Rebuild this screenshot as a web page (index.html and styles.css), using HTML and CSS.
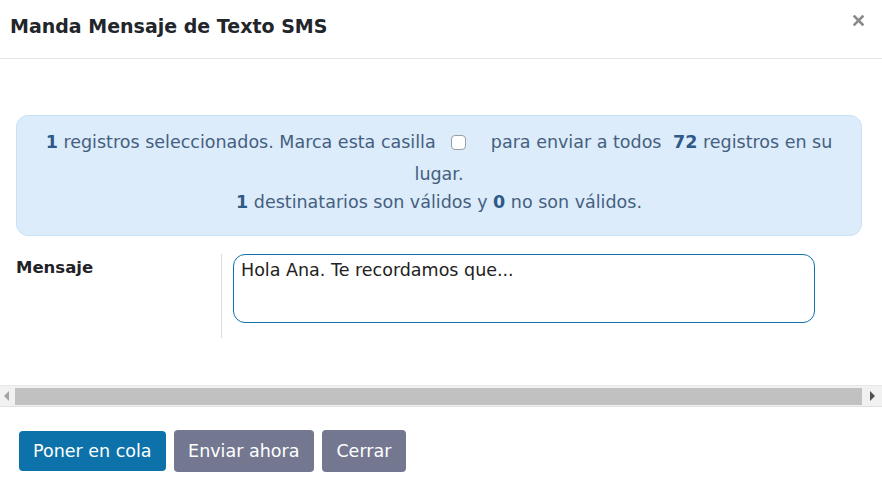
FILE: index.html
```html
<!DOCTYPE html>
<html lang="es">
<head>
<meta charset="utf-8">
<title>Manda Mensaje de Texto SMS</title>
<link rel="stylesheet" href="styles.css">
</head>
<body>
<div class="modal">
  <div class="modal-header">
    <h1 class="modal-title">Manda Mensaje de Texto SMS</h1>
    <button class="close" aria-label="Cerrar">
      <svg width="11" height="11" viewBox="0 0 11 11"><path d="M1.5 1.5 L9.5 9.5 M9.5 1.5 L1.5 9.5" stroke="#8a8a8a" stroke-width="2.6" stroke-linecap="square"/></svg>
    </button>
  </div>
  <div class="modal-body">
    <div class="alert">
      <p class="line1"><b>1</b> registros seleccionados. Marca esta casilla <span class="check"></span> para enviar a todos <b class="gap">72</b> registros en su<br>lugar.</p>
      <p class="line2"><b>1</b> destinatarios son válidos y <b>0</b> no son válidos.</p>
    </div>
    <div class="form-row">
      <div class="label-col"><label class="label">Mensaje</label></div>
      <div class="field-col">
        <div class="textarea">Hola Ana. Te recordamos que...</div>
      </div>
    </div>
  </div>
  <div class="hscroll">
    <span class="arrow left"></span>
    <div class="thumb"></div>
    <span class="arrow right"></span>
  </div>
  <div class="modal-footer">
    <button class="btn primary">Poner en cola</button>
    <button class="btn secondary">Enviar ahora</button>
    <button class="btn secondary">Cerrar</button>
  </div>
</div>
</body>
</html>
```
FILE: styles.css
```css
* { box-sizing: border-box; }
body {
  margin: 0;
  background: #fff;
  font-family: "DejaVu Sans", "Open Sans", sans-serif;
  color: #212529;
}
.modal { width: 882px; }
.modal-header {
  height: 59px;
  border-bottom: 1px solid #e4e4e4;
  display: flex;
  align-items: center;
  justify-content: space-between;
  padding: 0 18px 6px 10px;
}
.modal-title {
  margin: 0;
  font-size: 19px;
  font-weight: 600;
  color: #222529;
}
.close {
  border: 0;
  background: none;
  padding: 0;
  display: flex;
  margin-top: -12px;
}
.modal-body {
  padding: 56px 20px 0 16px;
}
.alert {
  height: 121px;
  background: #dcecfb;
  border: 1px solid #c9e1f6;
  border-radius: 12px;
  color: #45607f;
  text-align: center;
  font-size: 17.5px;
  padding: 10px 20px 0;
}
.alert b { color: #2d5a86; font-weight: 700; }
.alert b.gap { margin-left: 6px; }
.alert p { margin: 0; }
.line1 { line-height: 32px; }
.line2 { line-height: 24px; }
.check {
  display: inline-block;
  width: 15px;
  height: 15px;
  border: 1px solid #9a9fa6;
  border-radius: 4px;
  background: #fff;
  vertical-align: -2px;
  margin: 0 19px 0 10px;
}
.form-row {
  display: flex;
  margin-top: 18px;
  height: 84px;
}
.label-col {
  width: 206px;
  border-right: 1px solid #dcdcdc;
  padding-top: 4px;
}
.label {
  font-size: 16.5px;
  font-weight: 700;
  color: #1f2226;
}
.field-col { padding-left: 11px; }
.textarea {
  width: 582px;
  height: 69px;
  border: 1px solid #1172ad;
  border-radius: 12px;
  padding: 5px 7px;
  font-size: 17.5px;
  color: #222;
}
.hscroll {
  margin-top: 47px;
  height: 22px;
  background: #f1f1f1;
  border-top: 1px solid #e8e8e8;
  border-bottom: 1px solid #e0e0e0;
  display: flex;
  align-items: center;
  padding: 0 4px;
}
.thumb {
  flex: 1;
  height: 17px;
  background: #c1c1c1;
  margin: 0 8px 0 6px;
}
.arrow {
  width: 0; height: 0;
  border-top: 5px solid transparent;
  border-bottom: 5px solid transparent;
}
.arrow.left { border-right: 5px solid #a3a3a3; }
.arrow.right { border-left: 5px solid #505050; margin-right: 3px; }
.modal-footer {
  display: flex;
  align-items: center;
  gap: 8px;
  padding: 23px 0 0 19px;
}
.btn {
  border: 0;
  color: #fff;
  font-family: inherit;
  font-size: 17.5px;
  font-weight: 500;
  border-radius: 4px;
  padding: 0 14.5px;
  height: 42px;
}
.btn.primary { background: #0d72a9; height: 40px; padding: 0 14px; }
.btn.secondary { background: #737890; }
```
